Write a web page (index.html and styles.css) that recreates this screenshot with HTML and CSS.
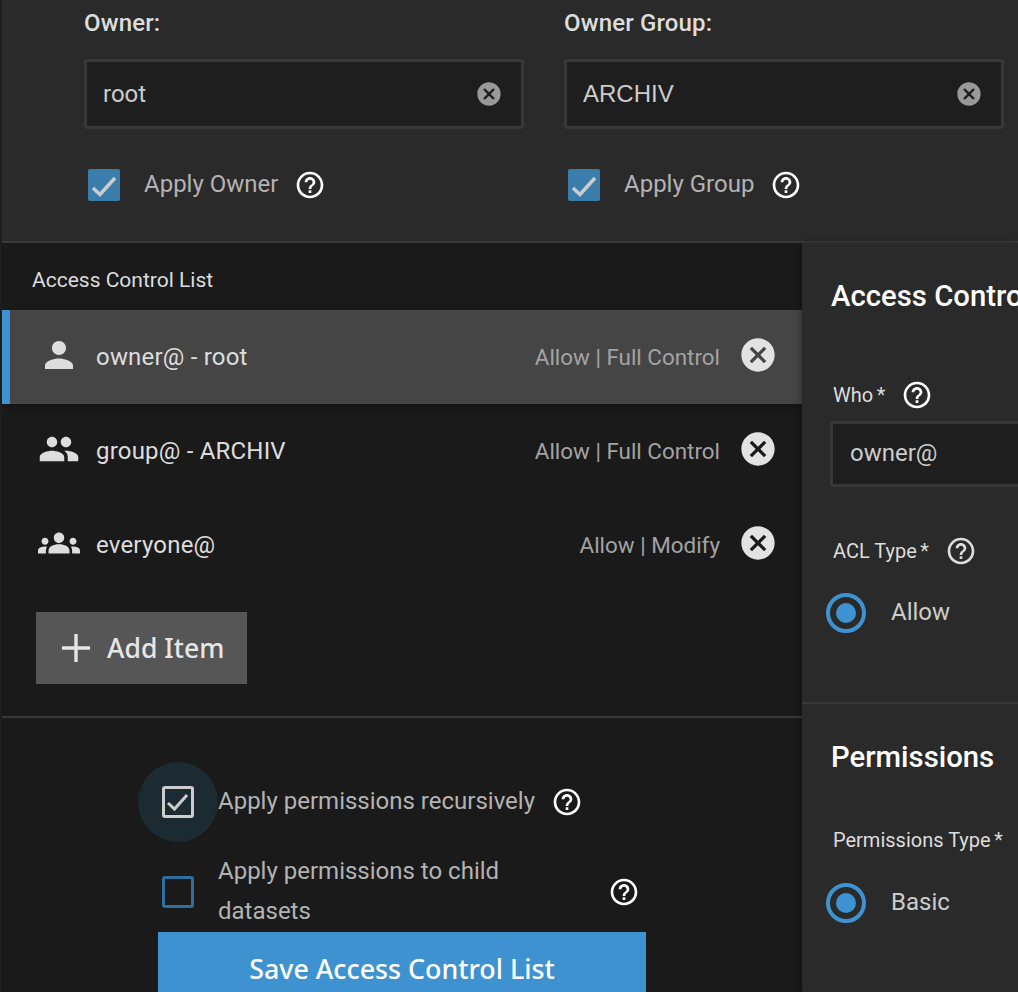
FILE: index.html
```html
<!DOCTYPE html>
<html>
<head>
    <title>Edit ACL</title>
    <meta name="viewport" content="width=device-width, initial-scale=1.0">
    <link rel="stylesheet" href="styles.css">
</head>
<body>
    <svg class="icon-defs" width="0" height="0">
        <symbol id="i-help" viewBox="0 0 24 24"><path d="M11 18h2v-2h-2v2zm1-16C6.48 2 2 6.48 2 12s4.48 10 10 10 10-4.48 10-10S17.52 2 12 2zm0 18c-4.41 0-8-3.59-8-8s3.59-8 8-8 8 3.59 8 8-3.59 8-8 8zm0-14c-2.21 0-4 1.79-4 4h2c0-1.1.9-2 2-2s2 .9 2 2c0 2-3 1.75-3 5h2c0-2.25 3-2.5 3-5 0-2.21-1.79-4-4-4z"/></symbol>
        <symbol id="i-cancel" viewBox="0 0 24 24"><path d="M12 2C6.47 2 2 6.47 2 12s4.47 10 10 10 10-4.47 10-10S17.53 2 12 2zm5 13.59L15.59 17 12 13.41 8.41 17 7 15.59 10.59 12 7 8.41 8.41 7 12 10.59 15.59 7 17 8.41 13.41 12 17 15.59z"/></symbol>
        <symbol id="i-person" viewBox="0 0 24 24"><path d="M12 12c2.21 0 4-1.79 4-4s-1.79-4-4-4-4 1.79-4 4 1.79 4 4 4zm0 2c-2.67 0-8 1.34-8 4v2h16v-2c0-2.66-5.33-4-8-4z"/></symbol>
        <symbol id="i-group" viewBox="0 0 24 24"><path d="M16 11c1.66 0 2.99-1.34 2.99-3S17.66 5 16 5c-1.66 0-3 1.34-3 3s1.34 3 3 3zm-8 0c1.66 0 2.99-1.34 2.99-3S9.66 5 8 5C6.34 5 5 6.34 5 8s1.34 3 3 3zm0 2c-2.33 0-7 1.17-7 3.5V19h14v-2.5c0-2.33-4.67-3.5-7-3.5zm8 0c-.29 0-.62.02-.97.05 1.16.84 1.97 1.97 1.97 3.45V19h6v-2.5c0-2.33-4.67-3.5-7-3.5z"/></symbol>
        <symbol id="i-groups" viewBox="0 0 24 24"><path d="M12 12.75c1.63 0 3.07.39 4.24.9 1.08.48 1.76 1.56 1.76 2.73V18H6v-1.61c0-1.18.68-2.26 1.76-2.73 1.17-.52 2.61-.91 4.24-.91zM4 13c1.1 0 2-.9 2-2s-.9-2-2-2-2 .9-2 2 .9 2 2 2zm1.13 1.1c-.37-.06-.74-.1-1.13-.1-.99 0-1.93.21-2.78.58C.48 14.9 0 15.62 0 16.43V18h4.5v-1.61c0-.83.23-1.61.63-2.29zM20 13c1.1 0 2-.9 2-2s-.9-2-2-2-2 .9-2 2 .9 2 2 2zm4 3.43c0-.81-.48-1.53-1.22-1.85-.85-.37-1.79-.58-2.78-.58-.39 0-.76.04-1.13.1.4.68.63 1.46.63 2.29V18H24v-1.57zM12 6c1.66 0 3 1.34 3 3s-1.34 3-3 3-3-1.34-3-3 1.34-3 3-3z"/></symbol>
        <symbol id="i-check" viewBox="0 0 32 32"><path d="M5 19l7 6.500L27 9" fill="none" stroke="currentColor" stroke-width="3.600"/></symbol>
        <symbol id="i-check-small" viewBox="0 0 26 26"><path d="M3 14l6.500 6L22 6" fill="none" stroke="currentColor" stroke-width="3"/></symbol>
    </svg>

    <div class="page">
        <div class="top">
            <div class="owner-col">
                <div class="owner-label">Owner:</div>
                <div class="field">
                    <span class="field-value">root</span>
                    <svg class="field-clear"><use href="#i-cancel"/></svg>
                </div>
                <div class="apply-row">
                    <span class="box-filled"><svg><use href="#i-check"/></svg></span>
                    <span class="apply-text">Apply Owner</span>
                    <svg class="help"><use href="#i-help"/></svg>
                </div>
            </div>
            <div class="owner-col">
                <div class="owner-label">Owner Group:</div>
                <div class="field">
                    <span class="field-value arial">ARCHIV</span>
                    <svg class="field-clear"><use href="#i-cancel"/></svg>
                </div>
                <div class="apply-row">
                    <span class="box-filled"><svg><use href="#i-check"/></svg></span>
                    <span class="apply-text">Apply Group</span>
                    <svg class="help"><use href="#i-help"/></svg>
                </div>
            </div>
        </div>

        <div class="main">
            <div class="list-panel">
                <div class="list-title">Access Control List</div>

                <div class="ace-row selected">
                    <svg class="ace-icon"><use href="#i-person"/></svg>
                    <span class="ace-name">owner@ - root</span>
                    <span class="ace-perm">Allow | Full Control</span>
                    <svg class="ace-remove"><use href="#i-cancel"/></svg>
                </div>
                <div class="ace-row">
                    <svg class="ace-icon"><use href="#i-group"/></svg>
                    <span class="ace-name">group@ - ARCHIV</span>
                    <span class="ace-perm">Allow | Full Control</span>
                    <svg class="ace-remove"><use href="#i-cancel"/></svg>
                </div>
                <div class="ace-row">
                    <svg class="ace-icon"><use href="#i-groups"/></svg>
                    <span class="ace-name">everyone@</span>
                    <span class="ace-perm">Allow | Modify</span>
                    <svg class="ace-remove"><use href="#i-cancel"/></svg>
                </div>

                <button class="add-btn">
                    <svg viewBox="0 0 28 28"><path d="M14 0v28M0 14h28" stroke="currentColor" stroke-width="3.400"/></svg>
                    Add Item
                </button>

                <div class="options">
                    <div class="option-row">
                        <span class="box-outline focused"><svg><use href="#i-check-small"/></svg></span>
                        <span class="option-text">Apply permissions recursively</span>
                        <svg class="help"><use href="#i-help"/></svg>
                    </div>
                    <div class="option-row second">
                        <span class="box-outline unchecked"></span>
                        <span class="option-text wrap">Apply permissions to child datasets</span>
                        <svg class="help"><use href="#i-help"/></svg>
                    </div>
                </div>

                <button class="save-btn">Save Access Control List</button>
            </div>

            <div class="form-panel">
                <div class="form-section first">
                    <h3 class="form-title">Access Control Entry</h3>
                    <div class="form-label who"><span>Who <span class="req">*</span></span><svg class="help"><use href="#i-help"/></svg></div>
                    <div class="who-input">owner@</div>
                    <div class="form-label acl"><span>ACL Type <span class="req">*</span></span><svg class="help dim"><use href="#i-help"/></svg></div>
                    <div class="radio-row"><span class="radio"></span><span class="radio-text">Allow</span></div>
                </div>
                <div class="form-section">
                    <h3 class="form-title">Permissions</h3>
                    <div class="form-label perm"><span>Permissions Type <span class="req">*</span></span></div>
                    <div class="radio-row"><span class="radio"></span><span class="radio-text">Basic</span></div>
                </div>
            </div>
        </div>
    </div>
</body>
</html>
```

FILE: styles.css
```css
* {
    box-sizing: border-box;
}
html, body {
    margin: 0;
    height: 992px;
    overflow: hidden;
}
body {
    background: #1e1e1e;
    font-family: 'Roboto', sans-serif;
    color: #ccc;
}
.icon-defs {
    position: absolute;
}
.page {
    margin-left: 2px;
    width: 1016px;
    height: 992px;
    overflow: hidden;
}
svg {
    fill: currentColor;
    display: block;
}
.help {
    width: 32px;
    height: 32px;
    color: #fff;
    flex-shrink: 0;
}
.help.dim {
    color: #ddd;
}

/* owner block */
.top {
    height: 241px;
    background: #2a2a2a;
    display: flex;
    gap: 40px;
    padding-left: 82px;
}
.owner-col {
    width: 440px;
}
.owner-label {
    height: 46px;
    line-height: 46px;
    font-size: 24px;
    font-weight: 500;
    letter-spacing: 0.150px;
    color: #ddd;
}
.field {
    margin-top: 13px;
    height: 70px;
    background: #1e1e1e;
    border: 3px solid #383838;
    border-radius: 3px;
    display: flex;
    align-items: center;
    justify-content: space-between;
    padding: 0 18.500px 0 16px;
}
.field-value {
    font-size: 24px;
    color: #ccc;
}
.field-value.arial {
    font-family: 'Liberation Sans', sans-serif;
}
.field-clear {
    width: 28px;
    height: 28px;
    color: #999;
}
.apply-row {
    margin-top: 40px;
    padding-left: 4px;
    height: 32px;
    display: flex;
    align-items: center;
}
.box-filled {
    width: 32px;
    height: 32px;
    background: #3a7dab;
    border-radius: 2px;
    color: #ccc;
    flex-shrink: 0;
}
.box-filled svg, .box-outline svg {
    width: 100%;
    height: 100%;
}
.apply-text {
    margin-left: 24px;
    margin-right: 16px;
    font-size: 24px;
    color: #b3b3b3;
    position: relative;
    top: -1px;
}

/* list on the left */
.main {
    display: flex;
    height: 751px;
    border-top: 2px solid #383838;
}
.list-panel {
    width: 800px;
    background: #1a1a1a;
    flex-shrink: 0;
    overflow: hidden;
}
.list-title {
    height: 67px;
    padding: 20px 0 0 30px;
    line-height: 34px;
    font-size: 21px;
    color: #ddd;
}
.ace-row {
    height: 94px;
    display: flex;
    align-items: center;
    padding-left: 36px;
    padding-right: 24px;
    color: #ddd;
}
.ace-row.selected {
    background: #454545;
    border-left: 8px solid #3d93d1;
    padding-left: 28px;
    box-shadow: 0 2px 6px rgba(0, 0, 0, 0.3);
}
.ace-icon {
    width: 42px;
    height: 42px;
    flex-shrink: 0;
    position: relative;
    top: -2px;
}
.ace-name {
    margin-left: 16px;
    font-size: 24px;
    letter-spacing: 0.200px;
}
.ace-perm {
    margin-left: auto;
    font-size: 22.400px;
    color: #a3a3a3;
}
.ace-remove {
    margin-left: 18px;
    width: 40px;
    height: 40px;
    color: #e2e2e2;
    position: relative;
    top: -2px;
}
.add-btn {
    display: flex;
    align-items: center;
    margin: 20px 0 0 34px;
    width: 211px;
    height: 72px;
    padding: 0 0 0 26px;
    background: #565656;
    border: 0;
    color: #e6e6e6;
    font-family: 'Noto Sans', sans-serif;
    font-size: 26.600px;
    font-weight: 500;
}
.add-btn svg {
    width: 28px;
    height: 28px;
    margin-right: 17px;
}
.options {
    position: relative;
    z-index: 0;
    margin-top: 32px;
    padding: 44px 0 0 160px;
    height: 216px;
    border-top: 2px solid #383838;
}
.option-row {
    display: flex;
    align-items: center;
    height: 80px;
}
.option-row.second {
    margin-top: 10px;
}
.box-outline {
    position: relative;
    width: 32px;
    height: 32px;
    border: 3px solid #ccc;
    border-radius: 3px;
    flex-shrink: 0;
    color: #ccc;
}
.box-outline.unchecked {
    border-color: #2f6f9f;
}
.box-outline.focused::before {
    content: '';
    position: absolute;
    left: -27px;
    top: -27px;
    width: 80px;
    height: 80px;
    border-radius: 50%;
    background: #1c2a32;
    z-index: -1;
}
.option-text {
    position: relative;
    top: -1px;
    margin-left: 24px;
    margin-right: 16px;
    font-size: 24px;
    line-height: 40px;
    color: #b3b3b3;
}
.option-text.wrap {
    width: 374px;
}
.save-btn {
    display: block;
    margin-left: 156px;
    width: 488px;
    height: 72px;
    background: #3f92d0;
    border: 0;
    color: #fff;
    font-family: 'Noto Sans', sans-serif;
    font-size: 26.800px;
    font-weight: 500;
}

/* form on the right */
.form-panel {
    flex: 1;
    min-width: 0;
    overflow: hidden;
    background: #2a2a2a;
    box-shadow: -2px 0 6px rgba(0, 0, 0, 0.25);
    position: relative;
}
.form-section {
    padding: 33px 0 0 29px;
}
.form-section.first {
    height: 461px;
    border-bottom: 2px solid #383838;
}
.form-title {
    margin: 0;
    height: 40px;
    line-height: 40px;
    font-size: 29.300px;
    font-weight: 500;
    color: #fff;
    white-space: nowrap;
}
.form-label {
    display: flex;
    align-items: center;
    height: 32px;
    padding-left: 2px;
    font-size: 20px;
    color: #ddd;
    white-space: nowrap;
}
.form-label.who {
    margin-top: 63px;
}
.form-label.acl {
    margin-top: 48px;
}
.form-label.perm {
    margin-top: 47px;
    margin-bottom: 27px;
}
.form-label.perm + .radio-row {
    margin-top: 27px;
}
.form-label .help {
    margin-left: 16px;
}
.req {
    margin-left: -1.500px;
}
.who-input {
    margin: 10px 0 0 -1px;
    width: 300px;
    height: 66px;
    line-height: 58px;
    padding-left: 17px;
    background: #1e1e1e;
    border: 3px solid #383838;
    border-radius: 3px;
    font-size: 24px;
    color: #ccc;
}
.radio-row {
    display: flex;
    align-items: center;
    margin: 26px 0 0 -5px;
    height: 40px;
}
.radio {
    width: 40px;
    height: 40px;
    border: 4px solid #3d93d1;
    border-radius: 50%;
    display: flex;
    align-items: center;
    justify-content: center;
}
.radio::after {
    content: '';
    width: 20px;
    height: 20px;
    border-radius: 50%;
    background: #3d93d1;
}
.radio-text {
    margin-left: 25px;
    font-size: 24px;
    color: #ccc;
    position: relative;
    top: -1px;
}
```
